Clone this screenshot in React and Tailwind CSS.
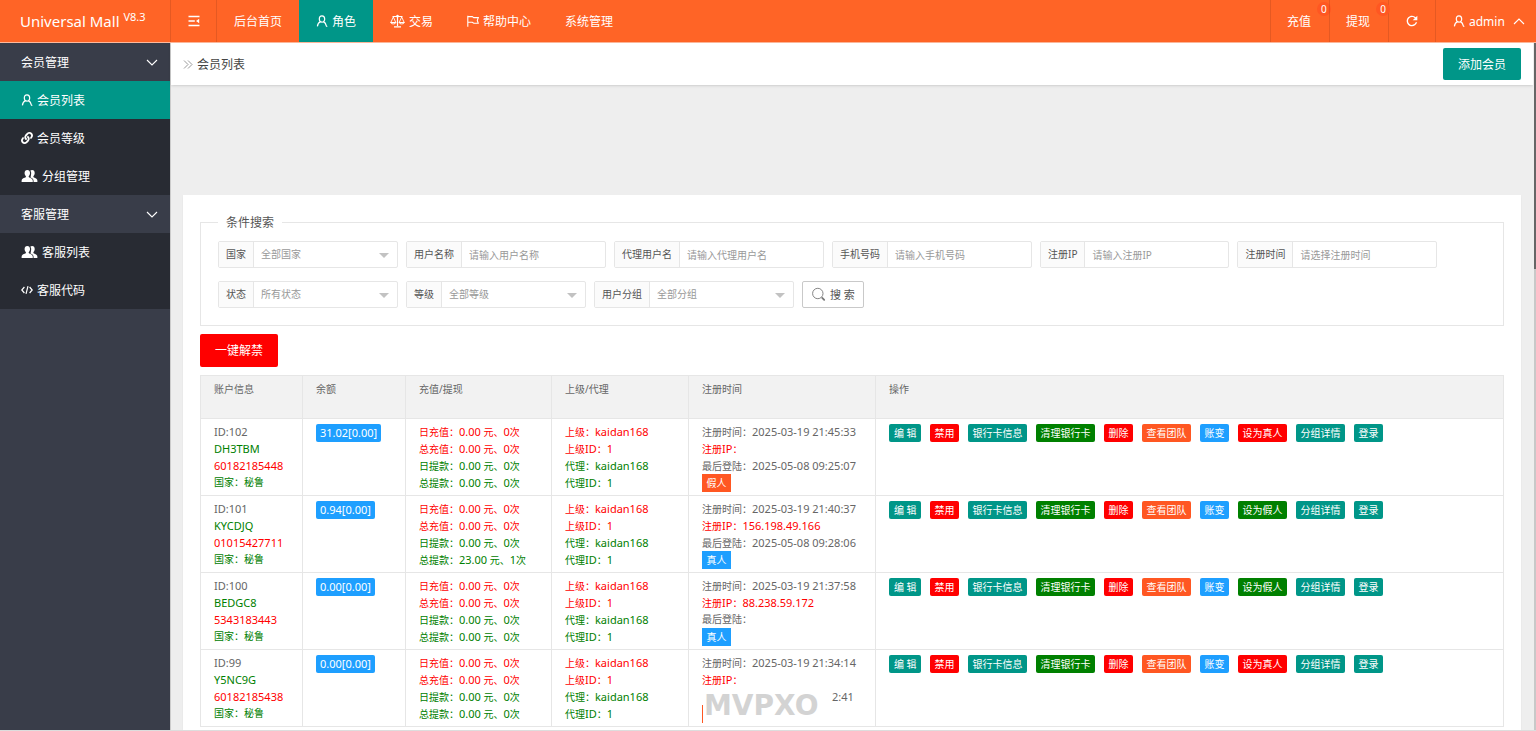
import { FaLink } from "react-icons/fa";
import { MdRefresh } from "react-icons/md";

function UserIcon() {
  return (
    <svg width="12" height="12" viewBox="0 0 12 12" fill="none" stroke="currentColor" strokeWidth="1.2">
      <ellipse cx="6" cy="4" rx="2.7" ry="3.2" />
      <path d="M4.6 6.6C2.6 7.4 1.6 9 1.4 11.4M7.4 6.6c1.6.8 2.6 2.4 2.9 4.2.1.5.5.6 1 .5" />
    </svg>
  );
}

function UsersIcon() {
  return (
    <svg width="17" height="12" viewBox="0 0 17 12" fill="currentColor">
      <path d="M6.3 0c1.7 0 2.7 1.2 2.7 3 0 1.3-.5 2.5-1.3 3.2v.9c.2.7 3.4 1.2 3.9 2.7.2.6.2 1.3.2 2.2H.6c0-.9 0-1.6.2-2.2.5-1.5 3.9-2 4.1-2.7v-.9C4.1 5.5 3.6 4.3 3.6 3 3.6 1.2 4.6 0 6.3 0z" />
      <path d="M9.3.7c.4-.4 1-.7 1.8-.7 1.7 0 2.6 1.2 2.6 3 0 1.3-.5 2.5-1.3 3.2v.9c.2.7 3.3 1.2 3.8 2.7.2.6.2 1.3.2 2.2h-3.8c0-1.2-.1-2.2-.6-2.9-.6-.8-1.7-1.2-2.5-1.6C9.8 6 10.2 4.5 10.2 3.1c0-.9-.3-1.8-.9-2.4z" />
    </svg>
  );
}

function ScaleIcon() {
  return (
    <svg width="15" height="14" viewBox="0 0 15 14" fill="none" stroke="currentColor">
      <path d="M7.5 1v11M2.5 2.5h10M4 12.8h7" strokeWidth="1.2" />
      <path d="M3.3 3L.8 8.5h5zM11.7 3L9.2 8.5h5z" strokeWidth=".9" />
      <path d="M.6 8.6c.5 1.8 4.9 1.8 5.4 0zM9 8.6c.5 1.8 4.9 1.8 5.4 0z" strokeWidth=".9" />
      <circle cx="7.5" cy="2.3" r="1" fill="currentColor" />
    </svg>
  );
}

function FlagIcon() {
  return (
    <svg width="12" height="12" viewBox="0 0 12 12" fill="none" stroke="currentColor" strokeWidth="1.1">
      <path d="M.8.8v11M1 1.6h4.3l1.4 1h4.6l-1 2.8 1 2.9H6.7l-1.4-1H1" />
    </svg>
  );
}

function ShrinkIcon() {
  return (
    <svg width="12" height="12" viewBox="0 0 12 12" fill="none" stroke="currentColor" strokeWidth="1.3">
      <path d="M.5 1.5h11M.5 6h6.3M.5 10.5h11" />
      <path d="M11.2 3.8v4.4L8 6z" fill="currentColor" stroke="none" />
    </svg>
  );
}

function CodeIcon() {
  return (
    <svg width="12" height="10" viewBox="0 0 12 10" fill="none" stroke="currentColor" strokeWidth="1.2">
      <path d="M3.4 2L.8 5l2.6 3M8.6 2l2.6 3-2.6 3M7 1.2L5 8.8" />
    </svg>
  );
}

function SearchIcon() {
  return (
    <svg width="15" height="15" viewBox="0 0 15 15" fill="none" stroke="#777">
      <circle cx="6.8" cy="6.5" r="5.2" strokeWidth=".9" />
      <path d="M11.2 10.9l2 2" strokeWidth="1.8" strokeLinecap="round" />
    </svg>
  );
}

function Chevron({ up }) {
  return (
    <svg width="12" height="7" viewBox="0 0 12 7" fill="none" stroke="currentColor" strokeWidth="1.1">
      <path d={up ? "M1 6l5-5 5 5" : "M1 1l5 5 5-5"} />
    </svg>
  );
}

const topNav = [
  { label: "后台首页" },
  { label: "角色", icon: <UserIcon />, active: true },
  { label: "交易", icon: <ScaleIcon /> },
  { label: "帮助中心", icon: <FlagIcon /> },
  { label: "系统管理" },
];

const sideNav = [
  {
    title: "会员管理",
    items: [
      { label: "会员列表", icon: <UserIcon />, active: true },
      { label: "会员等级", icon: <FaLink size={12} /> },
      { label: "分组管理", icon: <UsersIcon /> },
    ],
  },
  {
    title: "客服管理",
    items: [
      { label: "客服列表", icon: <UsersIcon /> },
      { label: "客服代码", icon: <CodeIcon /> },
    ],
  },
];

const filters = [
  { id: "country", label: "国家", hint: "全部国家", select: true },
  { id: "username", label: "用户名称", hint: "请输入用户名称" },
  { id: "agent", label: "代理用户名", hint: "请输入代理用户名" },
  { id: "phone", label: "手机号码", hint: "请输入手机号码" },
  { id: "ip", label: "注册IP", hint: "请输入注册IP" },
  { id: "time", label: "注册时间", hint: "请选择注册时间" },
  { id: "status", label: "状态", hint: "所有状态", select: true },
  { id: "level", label: "等级", hint: "全部等级", select: true },
  { id: "group", label: "用户分组", hint: "全部分组", select: true },
];

const members = [
  {
    id: 102,
    name: "DH3TBM",
    phone: "60182185448",
    balance: "31.02[0.00]",
    withdrawn: "0.00 元、0次",
    registered: "2025-03-19 21:45:33",
    ip: "",
    lastLogin: "2025-05-08 09:25:07",
    fake: true,
  },
  {
    id: 101,
    name: "KYCDJQ",
    phone: "01015427711",
    balance: "0.94[0.00]",
    withdrawn: "23.00 元、1次",
    registered: "2025-03-19 21:40:37",
    ip: "156.198.49.166",
    lastLogin: "2025-05-08 09:28:06",
    fake: false,
  },
  {
    id: 100,
    name: "BEDGC8",
    phone: "5343183443",
    balance: "0.00[0.00]",
    withdrawn: "0.00 元、0次",
    registered: "2025-03-19 21:37:58",
    ip: "88.238.59.172",
    lastLogin: "",
    fake: false,
  },
  {
    id: 99,
    name: "Y5NC9G",
    phone: "60182185438",
    balance: "0.00[0.00]",
    withdrawn: "0.00 元、0次",
    registered: "2025-03-19 21:34:14",
    ip: "",
    lastLogin: "2:41",
    fake: true,
    watermark: "MVPXO",
  },
];

const columns = [
  { title: "账户信息", width: "w-[102px]" },
  { title: "余额", width: "w-[103px]" },
  { title: "充值/提现", width: "w-[146px]" },
  { title: "上级/代理", width: "w-[137px]" },
  { title: "注册时间", width: "w-[187px]" },
  { title: "操作", width: "" },
];

// Latin text and digits run one size larger than the Chinese around them
function Line({ children, className = "" }) {
  return (
    <div className={`h-[17px] whitespace-nowrap ${className}`}>
      {children.split(/([\x21-\x7e]+(?: [\x21-\x7e]+)*)/).map((part, i) =>
        i % 2 ? (
          <span key={i} className="text-[11px]">
            {part}
          </span>
        ) : (
          part
        )
      )}
    </div>
  );
}

function Header() {
  return (
    <header className="flex h-[43px] shrink-0 border-b border-[#ffb99c] bg-[#ff6426] text-white">
      <div className="flex w-[170px] shrink-0 items-center pl-5 text-[15px]">
        <a href="#">
          Universal Mall <sup className="text-[11px]">V8.3</sup>
        </a>
      </div>
      <button aria-label="收起菜单" className="flex w-[46px] items-center justify-center border-l border-black/10">
        <ShrinkIcon />
      </button>
      <nav className="flex border-l border-black/10">
        {topNav.map((item) => (
          <a
            key={item.label}
            href="#"
            className={`flex items-center gap-1 px-[17px] ${item.active ? "bg-[#009688]" : ""}`}
          >
            {item.icon}
            {item.label}
          </a>
        ))}
      </nav>
      <div className="ml-auto flex">
        {["充值", "提现"].map((label) => (
          <a key={label} href="#" className="relative flex items-center border-l border-black/10 pl-4 pr-[18px]">
            {label}
            <span className="absolute -right-0.5 top-[2px] flex h-[14px] w-[14px] items-center justify-center rounded-full bg-[#ff5722] text-[10px] leading-none">
              0
            </span>
          </a>
        ))}
        <button aria-label="刷新" className="flex w-[47px] items-center justify-center border-l border-black/10">
          <MdRefresh size={16} />
        </button>
        <button className="flex w-[101px] items-center gap-1 border-l border-black/10 pl-[17px]">
          <UserIcon />
          <span className="mr-1">admin</span>
          <Chevron up />
        </button>
      </div>
    </header>
  );
}

function Sidebar() {
  return (
    <aside className="w-[170px] shrink-0 bg-[#393d49] text-white">
      {sideNav.map((group) => (
        <div key={group.title}>
          <button className="flex h-[38px] w-full items-center justify-between pl-[21px] pr-3">
            {group.title}
            <Chevron />
          </button>
          <div className="bg-[#282b33]">
            {group.items.map((item) => (
              <a
                key={item.label}
                href="#"
                className={`flex h-[38px] items-center gap-1 pl-[21px] ${item.active ? "bg-[#009688]" : ""}`}
              >
                {item.icon}
                {item.label}
              </a>
            ))}
          </div>
        </div>
      ))}
    </aside>
  );
}

function Filter({ id, label, hint, select }) {
  return (
    <div className="flex h-[27px] rounded-xs border border-[#e6e6e6] text-[10px]">
      <label htmlFor={id} className="flex items-center border-r border-[#e6e6e6] bg-[#fbfbfb] px-[7px] text-[#555]">
        {label}
      </label>
      <div className="relative w-[143px]">
        {select ? (
          <>
            <select id={id} className="h-full w-full appearance-none px-[7px] text-[#999] outline-none">
              <option>{hint}</option>
            </select>
            <svg
              className="pointer-events-none absolute right-2 top-[11px] text-[#c2c2c2]"
              width="10"
              height="5"
              viewBox="0 0 10 5"
            >
              <path d="M0 0h10L5 5z" fill="currentColor" />
            </svg>
          </>
        ) : (
          <input
            id={id}
            type="text"
            placeholder={hint}
            className="h-full w-full px-[7px] outline-none placeholder:text-[#999]"
          />
        )}
      </div>
    </div>
  );
}

function Actions({ fake }) {
  const actions = [
    ["编 辑", "bg-[#009688]"],
    ["禁用", "bg-[#ff0000]"],
    ["银行卡信息", "bg-[#009688]"],
    ["清理银行卡", "bg-[#008000]"],
    ["删除", "bg-[#ff0000]"],
    ["查看团队", "bg-[#ff5722]"],
    ["账变", "bg-[#1e9fff]"],
    fake ? ["设为真人", "bg-[#ff0000]"] : ["设为假人", "bg-[#008000]"],
    ["分组详情", "bg-[#009688]"],
    ["登录", "bg-[#009688]"],
  ];

  return (
    <div className="flex flex-wrap gap-[9px] pt-px">
      {actions.map(([label, color]) => (
        <button key={label} className={`h-[18px] rounded-xs pl-[5px] pr-1 leading-[18px] text-white ${color}`}>
          {label}
        </button>
      ))}
    </div>
  );
}

function MemberRow({ member }) {
  const cell = "border-b border-r border-[#e6e6e6] px-[13px] pt-1 pb-[3px]";
  const kindColor = member.fake ? "bg-[#ff5722]" : "bg-[#1e9fff]";

  return (
    <tr className="align-top">
      <td className={cell}>
        <Line>{`ID:${member.id}`}</Line>
        <Line className="text-[#008000]">{member.name}</Line>
        <Line className="text-[#ff0000]">{member.phone}</Line>
        <Line className="text-[#008000]">国家：秘鲁</Line>
      </td>
      <td className={cell}>
        <div className="flex pt-px">
          <button className="h-[18px] rounded-xs bg-[#1e9fff] px-1 text-[11px] leading-[18px] text-white">
            {member.balance}
          </button>
        </div>
      </td>
      <td className={cell}>
        <Line className="text-[#ff0000]">日充值：0.00 元、0次</Line>
        <Line className="text-[#ff0000]">总充值：0.00 元、0次</Line>
        <Line className="text-[#008000]">日提款：0.00 元、0次</Line>
        <Line className="text-[#008000]">{`总提款：${member.withdrawn}`}</Line>
      </td>
      <td className={cell}>
        <Line className="text-[#ff0000]">上级：kaidan168</Line>
        <Line className="text-[#ff0000]">上级ID：1</Line>
        <Line className="text-[#008000]">代理：kaidan168</Line>
        <Line className="text-[#008000]">代理ID：1</Line>
      </td>
      <td className={cell}>
        <Line>{`注册时间：${member.registered}`}</Line>
        <Line className="text-[#ff0000]">{`注册IP：${member.ip}`}</Line>
        {member.watermark ? (
          <div className="flex h-[35px]">
            <span className={`h-[18px] w-px self-end ${kindColor}`} />
            <span className="w-[129px] pl-px font-['DejaVu_Sans'] text-[28px] leading-[35px] font-bold text-[#d3d3d3]">
              {member.watermark}
            </span>
            <Line>{member.lastLogin}</Line>
          </div>
        ) : (
          <>
            <Line>{`最后登陆：${member.lastLogin}`}</Line>
            <span className={`block h-[18px] w-[29px] text-center leading-[18px] text-white ${kindColor}`}>
              {member.fake ? "假人" : "真人"}
            </span>
          </>
        )}
      </td>
      <td className={cell}>
        <Actions fake={member.fake} />
      </td>
    </tr>
  );
}

export default function App() {
  return (
    <div className="flex h-screen flex-col overflow-hidden border-b border-[#ddd] bg-[#eee] font-['Noto_Sans','Noto_Sans_CJK_SC',sans-serif] text-[12px] leading-[17px]">
      <Header />
      <div className="flex min-h-0 flex-1">
        <Sidebar />
        <main className="flex min-w-0 flex-1 flex-col border-l border-[#ccc]">
          <div className="flex h-[42px] shrink-0 items-center justify-between bg-white px-3 text-[#444] shadow-sm">
            <div className="flex items-center gap-1">
              <svg width="10" height="9" viewBox="0 0 10 9" fill="none" stroke="#999">
                <path d="M1 .5l4 4-4 4M5 .5l4 4-4 4" />
              </svg>
              会员列表
            </div>
            <button className="h-8 rounded-xs bg-[#009688] px-[15px] text-white">添加会员</button>
          </div>
          <section className="mx-3 mt-[110px] flex-1 bg-white px-[17px] pt-[19px] shadow-xs">
            <fieldset className="border border-[#e6e6e6] px-[17px] pb-[17px]">
              <legend className="px-2 text-[#555]">条件搜索</legend>
              <form className="flex flex-wrap gap-x-2 gap-y-[13px] pt-[10px]">
                {filters.map((filter) => (
                  <Filter key={filter.id} {...filter} />
                ))}
                <button
                  type="button"
                  className="flex h-[27px] items-center gap-1 rounded-xs border border-[#c9c9c9] px-2 text-[11px] text-[#555]"
                >
                  <SearchIcon />
                  搜 索
                </button>
              </form>
            </fieldset>
            <button className="mt-2 block h-[33px] rounded-xs bg-[#ff0000] px-[15px] text-white">一键解禁</button>
            <table className="mt-2 w-full table-fixed border-separate border-spacing-0 border-l border-t border-[#e6e6e6] text-[10px] text-[#666]">
              <thead>
                <tr className="h-[43px] bg-[#f2f2f2] text-left align-top">
                  {columns.map((column) => (
                    <th
                      key={column.title}
                      className={`border-b border-r border-[#e6e6e6] px-[13px] pt-[5px] font-normal ${column.width}`}
                    >
                      {column.title}
                    </th>
                  ))}
                </tr>
              </thead>
              <tbody>
                {members.map((member) => (
                  <MemberRow key={member.id} member={member} />
                ))}
              </tbody>
            </table>
          </section>
        </main>
        {/* scroll track */}
        <div className="w-[3px] shrink-0 border-l border-[#eee] bg-[#c8c8c8]">
          <div className="h-[226px] bg-[#666]" />
        </div>
      </div>
    </div>
  );
}
